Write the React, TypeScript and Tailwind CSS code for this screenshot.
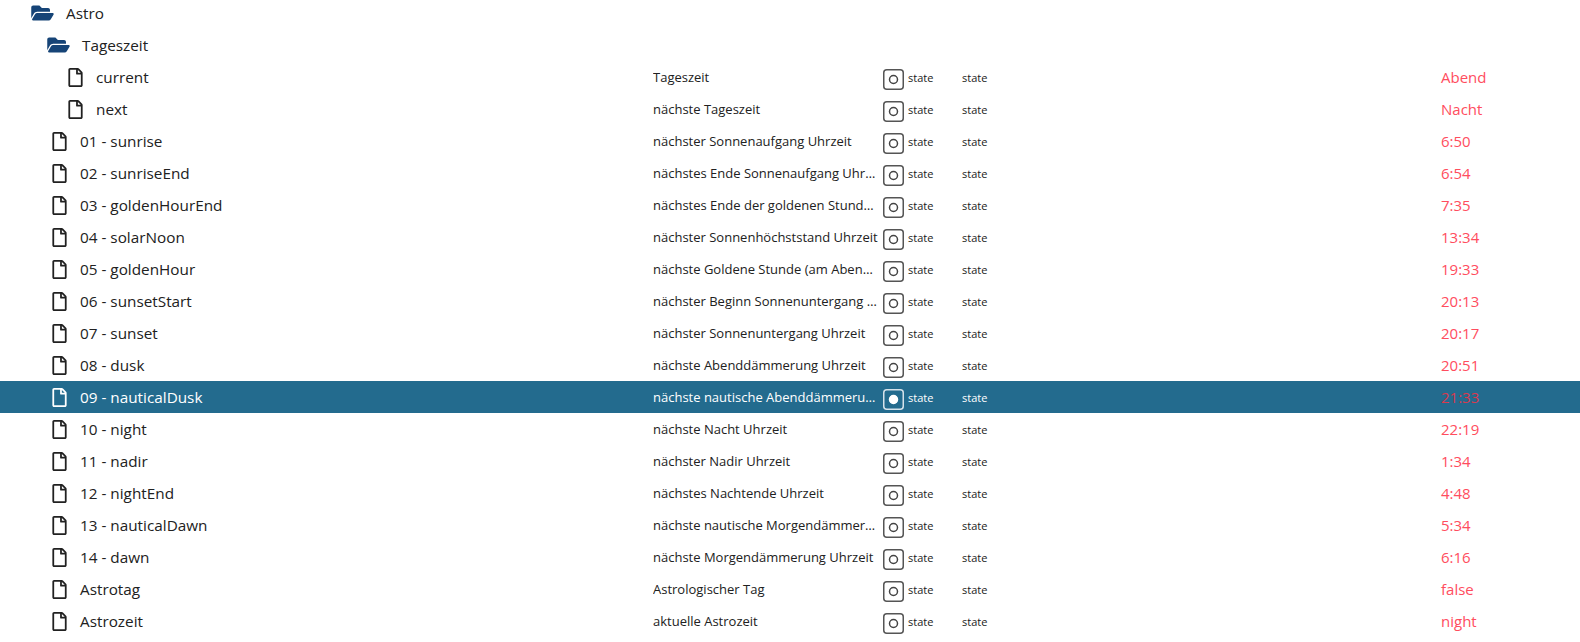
import React from 'react'
import { FaFolderOpen, FaRegFile } from 'react-icons/fa'

type Row = { name: string; desc?: string; value?: string; indent: number; folder?: boolean; selected?: boolean }

const rows: Row[] = [
  { name: 'Astro', indent: 30, folder: true },
  { name: 'Tageszeit', indent: 46, folder: true },
  { name: 'current', desc: 'Tageszeit', value: 'Abend', indent: 68 },
  { name: 'next', desc: 'nächste Tageszeit', value: 'Nacht', indent: 68 },
  { name: '01 - sunrise', desc: 'nächster Sonnenaufgang Uhrzeit', value: '6:50', indent: 52 },
  { name: '02 - sunriseEnd', desc: 'nächstes Ende Sonnenaufgang Uhrzeit', value: '6:54', indent: 52 },
  { name: '03 - goldenHourEnd', desc: 'nächstes Ende der goldenen Stunde Uhrzeit', value: '7:35', indent: 52 },
  { name: '04 - solarNoon', desc: 'nächster Sonnenhöchststand Uhrzeit', value: '13:34', indent: 52 },
  { name: '05 - goldenHour', desc: 'nächste Goldene Stunde (am Abend) Uhrzeit', value: '19:33', indent: 52 },
  { name: '06 - sunsetStart', desc: 'nächster Beginn Sonnenuntergang Uhrzeit', value: '20:13', indent: 52 },
  { name: '07 - sunset', desc: 'nächster Sonnenuntergang Uhrzeit', value: '20:17', indent: 52 },
  { name: '08 - dusk', desc: 'nächste Abenddämmerung Uhrzeit', value: '20:51', indent: 52 },
  { name: '09 - nauticalDusk', desc: 'nächste nautische Abenddämmerung Uhrzeit', value: '21:33', indent: 52, selected: true },
  { name: '10 - night', desc: 'nächste Nacht Uhrzeit', value: '22:19', indent: 52 },
  { name: '11 - nadir', desc: 'nächster Nadir Uhrzeit', value: '1:34', indent: 52 },
  { name: '12 - nightEnd', desc: 'nächstes Nachtende Uhrzeit', value: '4:48', indent: 52 },
  { name: '13 - nauticalDawn', desc: 'nächste nautische Morgendämmerung Uhrzeit', value: '5:34', indent: 52 },
  { name: '14 - dawn', desc: 'nächste Morgendämmerung Uhrzeit', value: '6:16', indent: 52 },
  { name: 'Astrotag', desc: 'Astrologischer Tag', value: 'false', indent: 52 },
  { name: 'Astrozeit', desc: 'aktuelle Astrozeit', value: 'night', indent: 52 },
]

// state icon, a rounded box with a small circle
const StateIcon = ({ selected }: { selected?: boolean }) => (
  <svg viewBox="0 0 21 21" className="mt-[4px] h-[21px] w-[21px] shrink-0" fill="none">
    <rect x="0.75" y="0.75" width="19.5" height="19.5" rx="3" strokeWidth="1.5" stroke={selected ? '#d5e2ea' : '#555555'} />
    <circle
      cx="10.5"
      cy="10.5"
      r="4"
      strokeWidth="1.5"
      stroke={selected ? '#ffffff' : '#444444'}
      fill={selected ? '#ffffff' : 'none'}
    />
  </svg>
)

const TreeRow = ({ row }: { row: Row }) => {
  const fg = row.selected ? 'text-white' : 'text-[#212121]'
  return (
    <div className={`flex h-8 items-center ${fg} ${row.selected ? 'bg-[#236b8e]' : ''}`}>
      <div className="flex w-[653px] shrink-0 items-center" style={{ paddingLeft: row.indent }}>
        {row.folder ? (
          <FaFolderOpen className="h-[20px] w-[25px] shrink-0 text-[#164477]" />
        ) : (
          <FaRegFile className="h-[19px] w-[15px] shrink-0" />
        )}
        <span className={`text-[15.3px] ${row.folder ? 'ml-[11px]' : 'ml-[13px]'}`}>{row.name}</span>
      </div>
      {row.desc && (
        <>
          <div className="mt-[1px] w-[230px] shrink-0 pr-[4px] text-[13px]">
            <div className="truncate">{row.desc}</div>
          </div>
          <StateIcon selected={row.selected} />
          <div className="ml-[4px] mt-[2px] w-[54px] shrink-0 text-[11px]">state</div>
          <div className="mt-[2px] w-[479px] shrink-0 text-[11px]">state</div>
          <div className={`text-[15px] ${row.selected ? 'text-[#d93a4e]' : 'text-[#ff4d5e]'}`}>{row.value}</div>
        </>
      )}
    </div>
  )
}

const App = () => {
  return (
    <div className="h-[642px] w-full overflow-hidden bg-white font-['Open_Sans','Noto_Sans',sans-serif]">
      <div className="-mt-[3px]">
        {rows.map((row) => (
          <TreeRow key={row.name} row={row} />
        ))}
      </div>
    </div>
  )
}

export default App
